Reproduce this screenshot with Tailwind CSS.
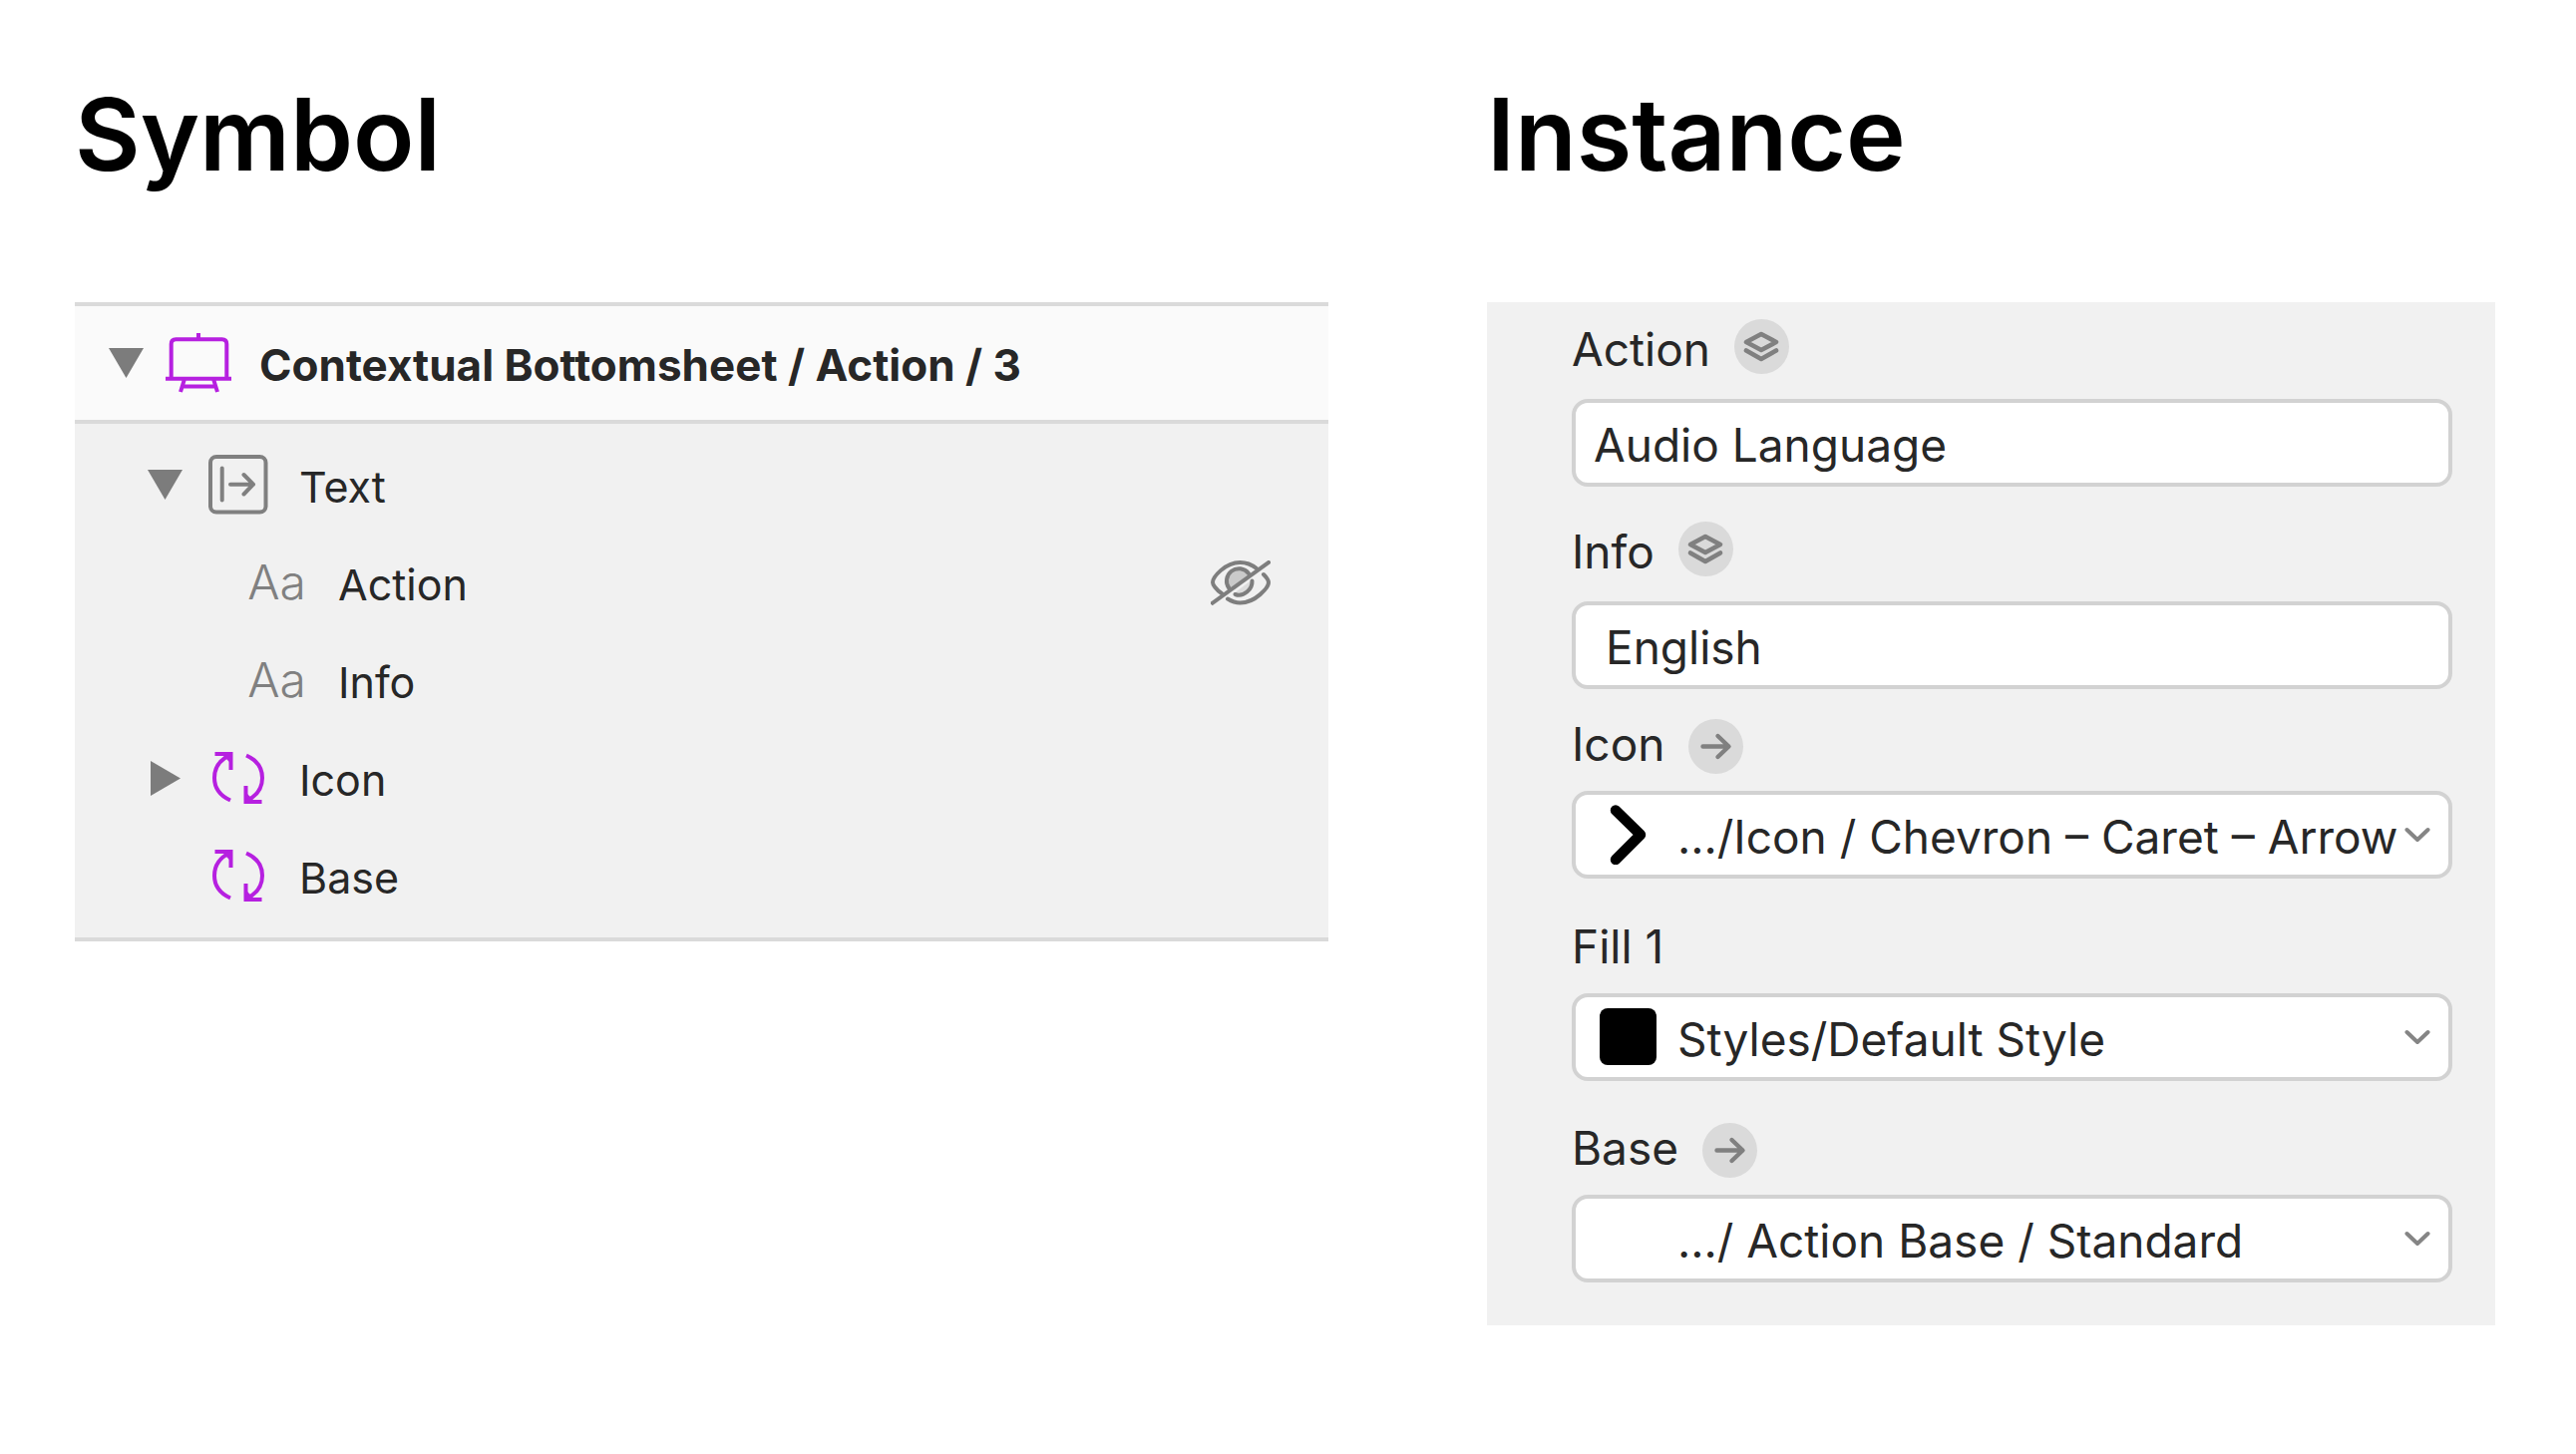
<!DOCTYPE html>
<html lang="en">
<head>
<meta charset="utf-8">
<title>Symbol and Instance</title>
<script src="https://cdn.jsdelivr.net/npm/@tailwindcss/browser@4"></script>
</head>
<body class="bg-white font-['Inter',sans-serif] text-[#272727]">
<svg class="hidden" aria-hidden="true">
  <symbol id="down" viewBox="0 0 35 30"><path d="M0 0H35L17.500 30Z" fill="#7c7c7c"/></symbol>
  <symbol id="right" viewBox="0 0 30 35"><path d="M0 0V35L30 17.500Z" fill="#7c7c7c"/></symbol>
  <symbol id="cycle" viewBox="0 0 52 52">
    <g fill="none" stroke="#b620e0" stroke-width="4">
      <path d="M2.500 2H18.500V18"/><path d="M18 3C7 8 2 16 2 26S8 44 18 48.500"/>
      <path d="M49.500 50H33.500V34"/><path d="M34 49C45 44 50 36 50 26S44 8 34 3.500"/>
      <path d="M11 4H17V10ZM41 48H35V42Z" fill="#b620e0" stroke="none"/>
    </g>
  </symbol>
  <symbol id="layers" viewBox="0 0 55 55">
    <g fill="none" stroke="#808080" stroke-width="4.600" stroke-linejoin="round" stroke-linecap="round"><path d="M27 15L42 23L27 31L12 23Z"/><path d="M12 31.500L27 40L42 31.500"/></g>
  </symbol>
  <symbol id="arrow" viewBox="0 0 55 55">
    <path d="M14.500 27.500H40M29.500 17L40.500 27.500L29.500 38" fill="none" stroke="#808080" stroke-width="4.400" stroke-linejoin="round" stroke-linecap="round"/>
  </symbol>
  <symbol id="chevron" viewBox="0 0 26 16"><path d="M2.500 3L13 13L23.500 3" fill="none" stroke="#858585" stroke-width="4" stroke-linejoin="round" stroke-linecap="round"/></symbol>
</svg>
<main class="grid grid-cols-[1257fr_1011fr] items-start gap-x-[159px] pt-[70px] pr-[81px] pb-32 pl-[75px]">
  <section>
    <h1 class="mb-[105px] text-[101px] leading-[128px] font-semibold text-black">Symbol</h1>
    <div class="border-y-4 border-[#dadada] bg-[#f1f1f1] text-[43px] leading-[52px]">
      <div class="flex h-[118px] items-center border-b-4 border-[#dadada] bg-[#fafafa] pl-[34px]">
        <button class="w-[35px]" aria-label="Collapse symbol"><svg class="h-[30px] w-[35px]"><use href="#down"/></svg></button>
        <svg class="mr-[27px] ml-[22px] h-[60px] w-[67px]" viewBox="0 0 67 60" fill="none" stroke="#b620e0" stroke-width="4">
          <path d="M33 0V6M0 45.700H66M5.700 45V11Q5.700 6.300 10.400 6.300H56.600Q61.300 6.300 61.300 11V45M19 46L15 59M48 46L52 59M17 53.400H50"/>
        </svg>
        <span class="pt-1 text-[44px] font-bold whitespace-nowrap">Contextual Bottomsheet / Action / 3</span>
      </div>
      <ul class="pt-3 pb-[13px]">
        <li class="flex h-[98px] items-center pl-[73px]">
          <button class="w-[35px]" aria-label="Collapse Text"><svg class="h-[30px] w-[35px]"><use href="#down"/></svg></button>
          <span class="mr-7 ml-[22px] flex w-[67px] justify-center">
            <svg class="size-[60px]" viewBox="0 0 60 60" fill="none" stroke="#808080" stroke-width="4" stroke-linecap="round" stroke-linejoin="round"><rect x="2" y="2" width="55.500" height="55.500" rx="6"/><path d="M13.700 13.500V45.500M22 29.700H45M35.500 20L45 29.700L35.500 39.500"/></svg>
          </span>
          <span class="pt-1">Text</span>
        </li>
        <li class="flex h-[98px] items-center pr-[58px] pl-[169px]">
          <span class="mr-7 w-[67px] text-center text-[48px] font-[350] text-[#808080]">Aa</span>
          <span class="pt-1">Action</span>
          <button class="ml-auto" aria-label="Show Action">
            <svg class="h-[45px] w-[60px]" viewBox="0 0 60 45" fill="none" stroke="#7e7e7e" stroke-width="4" stroke-linecap="round">
              <path d="M18 31A13 13 0 1 1 40 15Z" fill="#cacaca" stroke="none"/>
              <path d="M22 34L42 19Q43 30 33 34Z" fill="#dcdcdc" stroke="none"/>
              <path d="M11 33C5 29 2 24 2 22C2 17 14 2 29.500 2C35 2 41 4 46 8"/>
              <path d="M53 14C56 17 58 20 58 22C58 27 45 42.500 29.500 42.500C25 42.500 21 41 17 38.500"/>
              <path d="M18.500 28A12 12 0 0 1 38 13"/>
              <path d="M41.500 20.500C42 29 33 37 24.500 34"/>
              <path d="M2 42.500L58 2" stroke-linecap="square"/>
            </svg>
          </button>
        </li>
        <li class="flex h-[98px] items-center pl-[169px]">
          <span class="mr-7 w-[67px] text-center text-[48px] font-[350] text-[#808080]">Aa</span>
          <span class="pt-1">Info</span>
        </li>
        <li class="flex h-[98px] items-center pl-[73px]">
          <button class="flex w-[35px] justify-center" aria-label="Expand Icon"><svg class="h-[35px] w-[30px]"><use href="#right"/></svg></button>
          <span class="mr-7 ml-[22px] flex w-[67px] justify-center"><svg class="size-[52px]"><use href="#cycle"/></svg></span>
          <span class="pt-1">Icon</span>
        </li>
        <li class="flex h-[98px] items-center pl-[130px]">
          <span class="mr-7 flex w-[67px] justify-center"><svg class="size-[52px]"><use href="#cycle"/></svg></span>
          <span class="pt-1">Base</span>
        </li>
      </ul>
    </div>
  </section>

  <section>
    <h1 class="mb-[105px] text-[101px] leading-[128px] font-semibold text-black">Instance</h1>
    <form class="bg-[#f1f1f1] pt-[17px] pr-[43px] pb-[43px] pl-[85px] text-[46px]">
      <div class="mb-5 flex items-start gap-6">
        <label for="action" class="leading-[60px]">Action</label>
        <button type="button" class="rounded-full bg-[#dadada]" aria-label="Action layer"><svg class="size-[55px]"><use href="#layers"/></svg></button>
      </div>
      <input id="action" value="Audio Language" class="block h-[88px] w-full rounded-2xl border-4 border-[#d2d2d2] bg-white pt-1 pl-[18px]">

      <div class="mt-[35px] mb-5 flex items-start gap-6">
        <label for="info" class="leading-[60px]">Info</label>
        <button type="button" class="rounded-full bg-[#dadada]" aria-label="Info layer"><svg class="size-[55px]"><use href="#layers"/></svg></button>
      </div>
      <input id="info" value="English" class="block h-[88px] w-full rounded-2xl border-4 border-[#d2d2d2] bg-white pt-1 pl-[30px]">

      <div class="mt-[30px] mb-[17px] flex h-[55px] items-start gap-6">
        <label for="icon" class="leading-[50px]">Icon</label>
        <button type="button" class="rounded-full bg-[#dadada]" aria-label="Go to Icon"><svg class="size-[55px]"><use href="#arrow"/></svg></button>
      </div>
      <div class="relative">
        <select id="icon" class="block h-[88px] w-full appearance-none rounded-2xl border-4 border-[#d2d2d2] bg-white pt-1 pl-[102px]"><option>.../Icon / Chevron – Caret – Arrow</option></select>
        <svg class="pointer-events-none absolute top-[14px] left-[38px] h-[60px] w-[38px]" viewBox="0 0 38 60"><path d="M6 5.500L31 30L6 55" fill="none" stroke="#000" stroke-width="10.500" stroke-linecap="round" stroke-linejoin="round"/></svg>
        <svg class="pointer-events-none absolute top-9 right-[22px] h-4 w-[26px]"><use href="#chevron"/></svg>
      </div>

      <div class="mt-[43px] mb-[17px] flex h-[55px] items-start">
        <label for="fill" class="leading-[50px]">Fill 1</label>
      </div>
      <div class="relative">
        <select id="fill" class="block h-[88px] w-full appearance-none rounded-2xl border-4 border-[#d2d2d2] bg-white pt-1 pl-[102px]"><option>Styles/Default Style</option></select>
        <span class="pointer-events-none absolute top-[15px] left-[28px] size-[57px] rounded-lg bg-black"></span>
        <svg class="pointer-events-none absolute top-9 right-[22px] h-4 w-[26px]"><use href="#chevron"/></svg>
      </div>

      <div class="mt-[42px] mb-[17px] flex h-[55px] items-start gap-6">
        <label for="base" class="leading-[50px]">Base</label>
        <button type="button" class="rounded-full bg-[#dadada]" aria-label="Go to Base"><svg class="size-[55px]"><use href="#arrow"/></svg></button>
      </div>
      <div class="relative">
        <select id="base" class="block h-[88px] w-full appearance-none rounded-2xl border-4 border-[#d2d2d2] bg-white pt-1 pl-[102px]"><option>.../ Action Base / Standard</option></select>
        <svg class="pointer-events-none absolute top-9 right-[22px] h-4 w-[26px]"><use href="#chevron"/></svg>
      </div>
    </form>
  </section>
</main>
</body>
</html>
